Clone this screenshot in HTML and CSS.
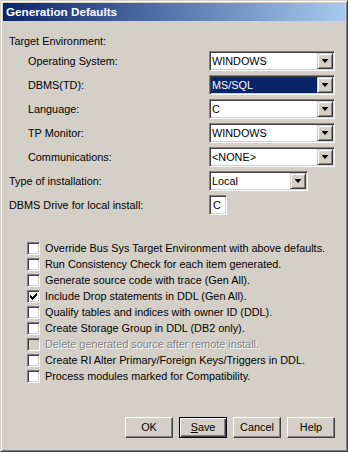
FILE: index.html
```html
<html>
<head>
	<title>Generation Defaults</title>
	<link rel="stylesheet" href="styles.css">
</head>
<body>
<div class="window">
	<div class="titlebar">Generation Defaults</div>
	<div class="content">
		<div class="group-label">Target Environment:</div>
		<div class="fields">
			<div class="field indent">
				<span class="label">Operating System:</span>
				<div class="combo"><span class="value">WINDOWS</span><span class="drop"></span></div>
			</div>
			<div class="field indent">
				<span class="label">DBMS(TD):</span>
				<div class="combo"><span class="value selected">MS/SQL</span><span class="drop"></span></div>
			</div>
			<div class="field indent">
				<span class="label">Language:</span>
				<div class="combo"><span class="value">C</span><span class="drop"></span></div>
			</div>
			<div class="field indent">
				<span class="label">TP Monitor:</span>
				<div class="combo"><span class="value">WINDOWS</span><span class="drop"></span></div>
			</div>
			<div class="field indent">
				<span class="label">Communications:</span>
				<div class="combo"><span class="value">&lt;NONE&gt;</span><span class="drop"></span></div>
			</div>
			<div class="field">
				<span class="label">Type of installation:</span>
				<div class="combo short"><span class="value">Local</span><span class="drop"></span></div>
			</div>
			<div class="field">
				<span class="label">DBMS Drive for local install:</span>
				<div class="textbox">C</div>
			</div>
		</div>

		<div class="checks">
			<div class="check"><span class="box"></span>Override Bus Sys Target Environment with above defaults.</div>
			<div class="check"><span class="box"></span>Run Consistency Check for each item generated.</div>
			<div class="check"><span class="box"></span>Generate source code with trace (Gen All).</div>
			<div class="check"><span class="box checked"><svg width="7" height="7" viewBox="0 0 7 7"><path d="M0 2h1v1h1v1h1v-1h1v-1h1v-1h1v-1h1v3h-1v1h-1v1h-1v1h-1v1h-1v-1h-1v-1h-1z" fill="#000"/></svg></span>Include Drop statements in DDL (Gen All).</div>
			<div class="check"><span class="box"></span>Qualify tables and indices with owner ID (DDL).</div>
			<div class="check"><span class="box"></span>Create Storage Group in DDL (DB2 only).</div>
			<div class="check disabled"><span class="box"></span>Delete generated source after remote install.</div>
			<div class="check"><span class="box"></span>Create RI Alter Primary/Foreign Keys/Triggers in DDL.</div>
			<div class="check"><span class="box"></span>Process modules marked for Compatibility.</div>
		</div>

		<div class="buttons">
			<div class="btn">OK</div>
			<div class="btn default"><u>S</u>ave</div>
			<div class="btn">Cancel</div>
			<div class="btn">Help</div>
		</div>
	</div>
</div>
</body>
</html>
```

FILE: styles.css
```css
body {
	margin:0;
	background:#d4d0c8;
	font-family:"Liberation Sans", Arial, sans-serif;
	font-size:10.85px;
	color:#000;
}
.window {
	width:348px;
	height:452px;
	box-sizing:border-box;
	background:#d4d0c8;
	border:1px solid;
	border-color:#d4d0c8 #404040 #404040 #d4d0c8;
	box-shadow:inset 1px 1px #fff, inset -1px -1px #808080;
	padding:2px;
	display:flex;
	flex-direction:column;
}
.titlebar {
	height:18px;
	line-height:18px;
	padding-left:3px;
	background:linear-gradient(to right, #0a246a, #a6caf0);
	color:#fff;
	font-weight:bold;
	font-size:11.7px;
}
.content {
	flex:1;
	display:flex;
	flex-direction:column;
	padding-left:6px;
}
.group-label {
	margin-top:13px;
	line-height:14px;
}
.fields {
	margin-top:3px;
	display:flex;
	flex-direction:column;
	gap:4px;
}
.field {
	display:flex;
	align-items:center;
	height:20px;
}
.field .label {
	width:200px;
}
.field.indent {
	padding-left:19px;
}
.field.indent .label {
	width:181px;
}
.combo, .textbox, .box {
	box-sizing:border-box;
	background:#fff;
	border:1px solid;
	border-color:#808080 #fff #fff #808080;
	box-shadow:inset 1px 1px #404040, inset -1px -1px #d4d0c8;
}
.combo {
	width:126px;
	height:20px;
	padding:1px;
	display:flex;
}
.combo.short {
	width:99px;
}
.combo .value {
	flex:1;
	line-height:16px;
	padding-left:1px;
	white-space:nowrap;
}
.combo .value.selected {
	background:#0a246a;
	color:#fff;
}
.drop {
	width:16px;
	height:16px;
	box-sizing:border-box;
	background:#d4d0c8;
	border:1px solid;
	border-color:#d4d0c8 #404040 #404040 #d4d0c8;
	box-shadow:inset 1px 1px #fff, inset -1px -1px #808080;
	display:flex;
	align-items:center;
	justify-content:center;
}
.drop:after {
	content:"";
	width:7px;
	height:4px;
	background:#000;
	clip-path:polygon(0 0, 100% 0, 50% 100%);
}
.textbox {
	width:18px;
	height:20px;
	line-height:18px;
	padding-left:3px;
}
.checks {
	margin-top:25px;
	padding-left:18px;
	display:flex;
	flex-direction:column;
}
.check {
	display:flex;
	align-items:center;
	height:16px;
	white-space:nowrap;
}
.box {
	width:13px;
	height:13px;
	margin-right:5px;
	display:flex;
	align-items:center;
	justify-content:center;
	flex-shrink:0;
}
.box svg {
	display:block;
}
.check.disabled {
	color:#808080;
	text-shadow:1px 1px #fff;
}
.check.disabled .box {
	background:#d4d0c8;
}
.buttons {
	margin-top:auto;
	margin-bottom:11px;
	padding-right:10px;
	display:flex;
	justify-content:flex-end;
	gap:6px;
}
.btn {
	width:48px;
	height:21px;
	box-sizing:border-box;
	border:1px solid;
	border-color:#fff #404040 #404040 #fff;
	box-shadow:inset -1px -1px #808080;
	text-align:center;
	line-height:19px;
}
.btn.default {
	border-color:#000;
	box-shadow:inset 1px 1px #fff, inset -1px -1px #404040, inset -2px -2px #808080;
}
```
